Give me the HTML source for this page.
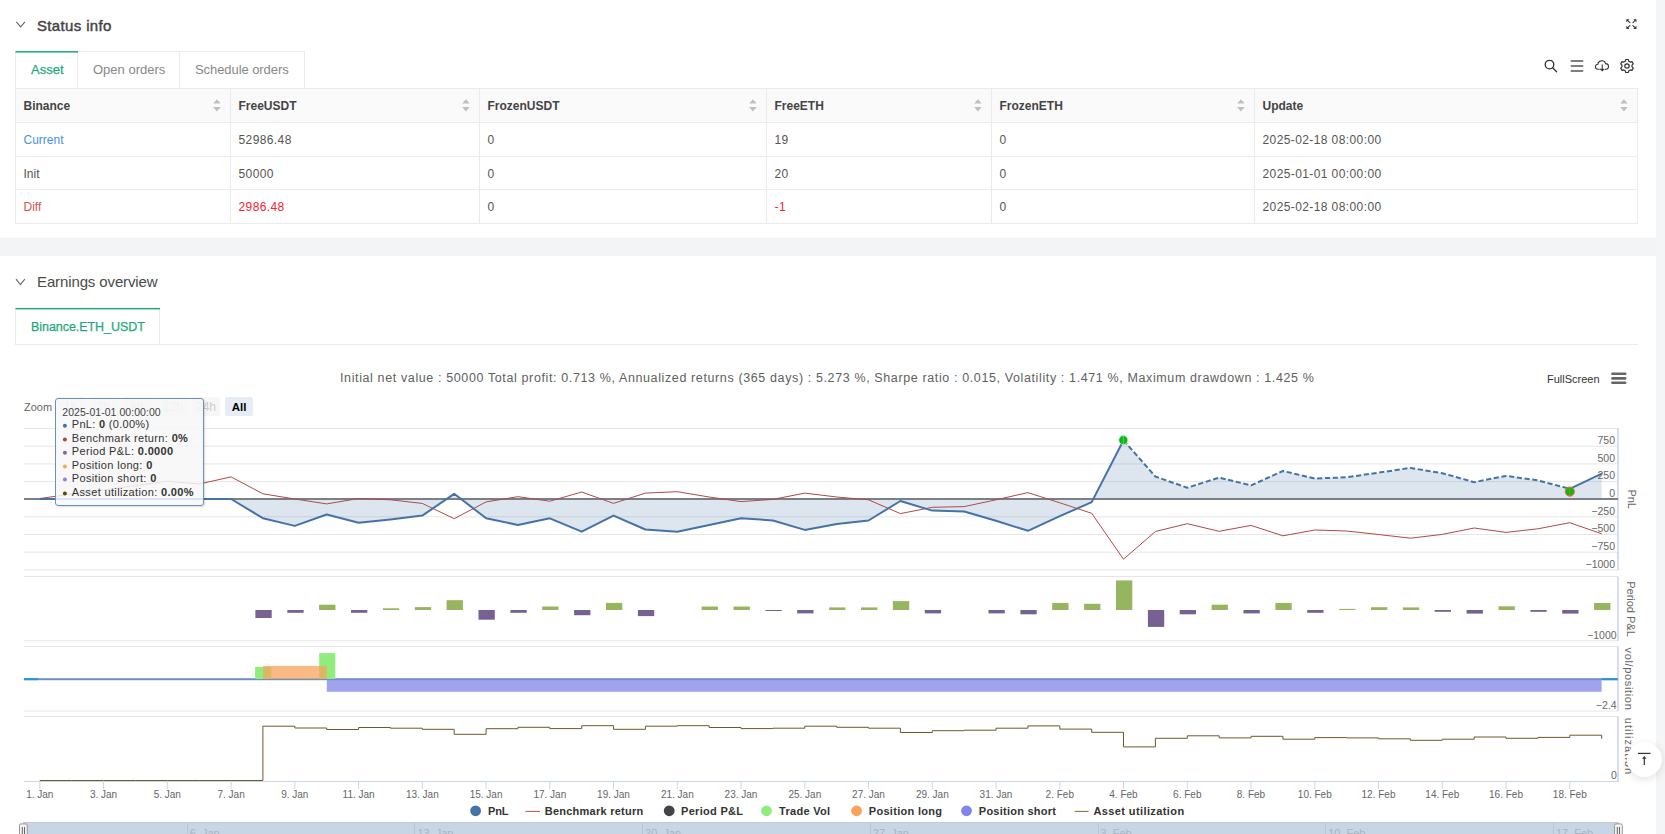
<!DOCTYPE html>
<html><head><meta charset="utf-8"><style>
*{box-sizing:border-box}
html,body{margin:0;padding:0;width:1665px;height:834px;overflow:hidden;background:#fff;font-family:'Liberation Sans', sans-serif;}
.a{position:absolute;white-space:pre}
.band{position:absolute;left:0;width:1656px;top:238px;height:18px;background:#f3f4f6}
.sb{position:absolute;left:1656px;top:0;width:9px;height:834px;background:#f4f5f7}
.tabs .t{position:absolute;top:51px;height:37px;border:1px solid #ebebeb;border-bottom:none;background:#fff}
.tbl{position:absolute;left:15px;top:88px;width:1623px;border-collapse:collapse}
.cell{position:absolute;font-size:12px;color:#555}
</style></head><body>
<div class="sb"></div>
<div class="band"></div>
<svg class="a" style="left:0;top:0" width="40" height="40"><polyline points="16.3,21.8 20.6,26.8 24.9,21.8" fill="none" stroke="#666" stroke-width="1.1"/></svg>
<div class="a" style="left:37px;top:16px;font-size:15px;line-height:20px;color:#444;-webkit-text-stroke:0.45px #444;letter-spacing:0.35px">Status info</div>
<svg class="a" style="left:1620px;top:13px" width="22" height="22" viewBox="0 0 22 22"><g transform="translate(11.4,11.1) scale(1.13) translate(-11.25,-11.35)"><g stroke="#3a3a3a" stroke-width="1.05" fill="none" stroke-linecap="round"><path d="M7.6,7.8 L9.9,10"/><path d="M14.9,7.8 L12.6,10"/><path d="M7.6,14.9 L9.9,12.7"/><path d="M14.9,14.9 L12.6,12.7"/></g><g fill="#3a3a3a"><path d="M6.8,7 L9.6,7 L6.8,9.8 Z"/><path d="M15.7,7 L12.9,7 L15.7,9.8 Z"/><path d="M6.8,15.7 L9.6,15.7 L6.8,12.9 Z"/><path d="M15.7,15.7 L12.9,15.7 L15.7,12.9 Z"/></g></g></svg>
<div class="a" style="left:15px;top:51px;width:290px;height:38px;border:1px solid #ebebeb;border-bottom:none"></div>
<div class="a" style="left:77px;top:51px;width:1px;height:37px;background:#ebebeb"></div>
<div class="a" style="left:179px;top:51px;width:1px;height:37px;background:#ebebeb"></div>
<svg class="a" style="left:0;top:40px" width="100" height="20"><rect x="15.5" y="11.1" width="62.5" height="1.5" fill="#1fa97c"/></svg>
<div class="a" style="left:31px;top:62px;font-size:13px;line-height:16px;color:#1fa97c;-webkit-text-stroke:0.25px #1fa97c">Asset</div>
<div class="a" style="left:93px;top:62px;font-size:13px;line-height:16px;color:#888">Open orders</div>
<div class="a" style="left:195px;top:62px;font-size:13px;line-height:16px;color:#888;letter-spacing:-0.07px">Schedule orders</div>
<svg class="a" style="left:1540px;top:55px" width="100" height="22" viewBox="1540 55 100 22"><g fill="none" stroke="#333" stroke-width="1.3"><circle cx="1549.5" cy="64.6" r="4.3"/><path d="M1552.7,67.8 L1556.6,71.7" stroke-linecap="round"/></g><g stroke="#555" stroke-width="1.5"><path d="M1570.7,60.9 H1583.2 M1570.7,66.1 H1583.2 M1570.7,71.1 H1583.2"/></g><g fill="none" stroke="#333" stroke-width="1.2" stroke-linecap="round" transform="translate(1602,65.5) scale(0.9) translate(-1602,-65.5)"><path d="M1599,69.6 H1597.6 C1593.8,69.6 1593.8,64.2 1597.4,64.2 C1597.8,59.6 1604.6,58.8 1606,63.4 C1610.2,63.4 1610.2,69.6 1606.6,69.6 H1605.4"/><path d="M1602.2,64.8 V71.4 M1600.4,69.6 L1602.2,71.4 L1604,69.6"/></g><g fill="none" stroke="#333" stroke-width="1.2" stroke-linejoin="round"><path d="M1625.26,61.21 L1625.74,59.52 L1628.26,59.52 L1628.74,61.21 L1630.28,62.09 L1631.98,61.67 L1633.24,63.85 L1632.02,65.11 L1632.02,66.89 L1633.24,68.15 L1631.98,70.33 L1630.28,69.91 L1628.74,70.79 L1628.26,72.48 L1625.74,72.48 L1625.26,70.79 L1623.72,69.91 L1622.02,70.33 L1620.76,68.15 L1621.98,66.89 L1621.98,65.11 L1620.76,63.85 L1622.02,61.67 L1623.72,62.09 Z"/><circle cx="1627" cy="66" r="2.2"/></g></svg>
<div class="a" style="left:15px;top:88px;width:1623px;height:35px;background:#fafafa"></div>
<div class="a" style="left:15px;top:88.0px;width:1623px;height:1px;background:#ebebeb"></div>
<div class="a" style="left:15px;top:122.0px;width:1623px;height:1px;background:#ebebeb"></div>
<div class="a" style="left:15px;top:156.0px;width:1623px;height:1px;background:#ebebeb"></div>
<div class="a" style="left:15px;top:189.0px;width:1623px;height:1px;background:#ebebeb"></div>
<div class="a" style="left:15px;top:223.0px;width:1623px;height:1px;background:#ebebeb"></div>
<div class="a" style="left:15.0px;top:88px;width:1px;height:136px;background:#ebebeb"></div>
<div class="a" style="left:230.0px;top:88px;width:1px;height:136px;background:#ebebeb"></div>
<div class="a" style="left:479.0px;top:88px;width:1px;height:136px;background:#ebebeb"></div>
<div class="a" style="left:766.0px;top:88px;width:1px;height:136px;background:#ebebeb"></div>
<div class="a" style="left:991.0px;top:88px;width:1px;height:136px;background:#ebebeb"></div>
<div class="a" style="left:1254.0px;top:88px;width:1px;height:136px;background:#ebebeb"></div>
<div class="a" style="left:1637.0px;top:88px;width:1px;height:136px;background:#ebebeb"></div>
<div class="a" style="left:23.5px;top:98.5px;font-size:12px;line-height:15px;font-weight:bold;color:#444">Binance</div>
<svg class="a" style="left:213.0px;top:98px" width="8" height="14" viewBox="0 0 8 14"><path d="M0.2,5.6 L3.9,1.2 L7.6,5.6 Z M0.2,9 L3.9,13.4 L7.6,9 Z" fill="#bfbfbf"/></svg>
<div class="a" style="left:238.5px;top:98.5px;font-size:12px;line-height:15px;font-weight:bold;color:#444">FreeUSDT</div>
<svg class="a" style="left:462.0px;top:98px" width="8" height="14" viewBox="0 0 8 14"><path d="M0.2,5.6 L3.9,1.2 L7.6,5.6 Z M0.2,9 L3.9,13.4 L7.6,9 Z" fill="#bfbfbf"/></svg>
<div class="a" style="left:487.5px;top:98.5px;font-size:12px;line-height:15px;font-weight:bold;color:#444">FrozenUSDT</div>
<svg class="a" style="left:749.0px;top:98px" width="8" height="14" viewBox="0 0 8 14"><path d="M0.2,5.6 L3.9,1.2 L7.6,5.6 Z M0.2,9 L3.9,13.4 L7.6,9 Z" fill="#bfbfbf"/></svg>
<div class="a" style="left:774.5px;top:98.5px;font-size:12px;line-height:15px;font-weight:bold;color:#444">FreeETH</div>
<svg class="a" style="left:974.0px;top:98px" width="8" height="14" viewBox="0 0 8 14"><path d="M0.2,5.6 L3.9,1.2 L7.6,5.6 Z M0.2,9 L3.9,13.4 L7.6,9 Z" fill="#bfbfbf"/></svg>
<div class="a" style="left:999.5px;top:98.5px;font-size:12px;line-height:15px;font-weight:bold;color:#444">FrozenETH</div>
<svg class="a" style="left:1237.0px;top:98px" width="8" height="14" viewBox="0 0 8 14"><path d="M0.2,5.6 L3.9,1.2 L7.6,5.6 Z M0.2,9 L3.9,13.4 L7.6,9 Z" fill="#bfbfbf"/></svg>
<div class="a" style="left:1262.5px;top:98.5px;font-size:12px;line-height:15px;font-weight:bold;color:#444">Update</div>
<svg class="a" style="left:1620.0px;top:98px" width="8" height="14" viewBox="0 0 8 14"><path d="M0.2,5.6 L3.9,1.2 L7.6,5.6 Z M0.2,9 L3.9,13.4 L7.6,9 Z" fill="#bfbfbf"/></svg>
<div class="a" style="left:23.5px;top:133px;font-size:12px;line-height:14px;color:#4a90e2;letter-spacing:0">Current</div>
<div class="a" style="left:238.5px;top:133px;font-size:12px;line-height:14px;color:#555;letter-spacing:0.4px">52986.48</div>
<div class="a" style="left:487.5px;top:133px;font-size:12px;line-height:14px;color:#555;letter-spacing:0.4px">0</div>
<div class="a" style="left:774.5px;top:133px;font-size:12px;line-height:14px;color:#555;letter-spacing:0.4px">19</div>
<div class="a" style="left:999.5px;top:133px;font-size:12px;line-height:14px;color:#555;letter-spacing:0.4px">0</div>
<div class="a" style="left:1262.5px;top:133px;font-size:12px;line-height:14px;color:#555;letter-spacing:0.4px">2025-02-18 08:00:00</div>
<div class="a" style="left:23.5px;top:167px;font-size:12px;line-height:14px;color:#555;letter-spacing:0">Init</div>
<div class="a" style="left:238.5px;top:167px;font-size:12px;line-height:14px;color:#555;letter-spacing:0.4px">50000</div>
<div class="a" style="left:487.5px;top:167px;font-size:12px;line-height:14px;color:#555;letter-spacing:0.4px">0</div>
<div class="a" style="left:774.5px;top:167px;font-size:12px;line-height:14px;color:#555;letter-spacing:0.4px">20</div>
<div class="a" style="left:999.5px;top:167px;font-size:12px;line-height:14px;color:#555;letter-spacing:0.4px">0</div>
<div class="a" style="left:1262.5px;top:167px;font-size:12px;line-height:14px;color:#555;letter-spacing:0.4px">2025-01-01 00:00:00</div>
<div class="a" style="left:23.5px;top:200px;font-size:12px;line-height:14px;color:#d9534f;letter-spacing:0">Diff</div>
<div class="a" style="left:238.5px;top:200px;font-size:12px;line-height:14px;color:#f5222d;letter-spacing:0.4px">2986.48</div>
<div class="a" style="left:487.5px;top:200px;font-size:12px;line-height:14px;color:#555;letter-spacing:0.4px">0</div>
<div class="a" style="left:774.5px;top:200px;font-size:12px;line-height:14px;color:#f5222d;letter-spacing:0.4px">-1</div>
<div class="a" style="left:999.5px;top:200px;font-size:12px;line-height:14px;color:#555;letter-spacing:0.4px">0</div>
<div class="a" style="left:1262.5px;top:200px;font-size:12px;line-height:14px;color:#555;letter-spacing:0.4px">2025-02-18 08:00:00</div>
<svg class="a" style="left:0;top:260px" width="40" height="40"><polyline points="16,19.2 20.4,24.6 24.8,19.2" fill="none" stroke="#666" stroke-width="1.1"/></svg>
<div class="a" style="left:37px;top:272px;font-size:15px;line-height:20px;color:#4a4a4a;letter-spacing:-0.12px">Earnings overview</div>
<div class="a" style="left:15px;top:308px;width:145px;height:37px;border:1px solid #ebebeb;border-bottom:none"></div>
<div class="a" style="left:15px;top:344px;width:1623px;height:1px;background:#ebebeb"></div>
<svg class="a" style="left:0;top:300px" width="200" height="20"><rect x="15.5" y="7.9" width="144.5" height="1.5" fill="#1fa97c"/></svg>
<div class="a" style="left:31px;top:319px;font-size:12.5px;line-height:16px;color:#1fa97c;-webkit-text-stroke:0.25px #1fa97c;letter-spacing:-0.05px">Binance.ETH_USDT</div>
<div class="a" style="left:340px;top:371px;font-size:12.5px;line-height:15px;color:#606060;letter-spacing:0.62px">Initial net value : 50000 Total profit: 0.713 %, Annualized returns (365 days) : 5.273 %, Sharpe ratio : 0.015, Volatility : 1.471 %, Maximum drawdown : 1.425 %</div>
<div class="a" style="left:1547px;top:373px;font-size:11px;line-height:13px;color:#333">FullScreen</div>
<svg class="a" style="left:1608px;top:368px" width="22" height="20"><g stroke="#666" stroke-width="2.6" stroke-linecap="round"><path d="M4.4,5.7 H17.2 M4.4,10.4 H17.2 M4.4,14.8 H17.2"/></g></svg>
<div class="a" style="left:24px;top:401px;font-size:11px;line-height:13px;color:#666">Zoom</div>
<div class="a" style="left:57px;top:397px;width:28px;height:19px;background:#f7f7f7;border-radius:2px;font-size:12px;line-height:21px;color:#ccc;text-align:center">1h</div>
<div class="a" style="left:89.5px;top:397px;width:28px;height:19px;background:#f7f7f7;border-radius:2px;font-size:12px;line-height:21px;color:#ccc;text-align:center">3h</div>
<div class="a" style="left:123px;top:397px;width:28px;height:19px;background:#f7f7f7;border-radius:2px;font-size:12px;line-height:21px;color:#ccc;text-align:center">8h</div>
<div class="a" style="left:159px;top:397px;width:28px;height:19px;background:#f7f7f7;border-radius:2px;font-size:12px;line-height:21px;color:#ccc;text-align:center">12h</div>
<div class="a" style="left:192px;top:397px;width:28px;height:19px;background:#f7f7f7;border-radius:2px;font-size:12px;line-height:21px;color:#ccc;text-align:center">24h</div>
<div class="a" style="left:225px;top:397px;width:28px;height:19px;background:#e6ebf5;border-radius:2px;font-size:11.5px;line-height:21px;color:#000;font-weight:bold;text-align:center">All</div>
<svg class="a" style="left:0;top:795px" width="1665" height="30" viewBox="0 795 1665 30" font-family="Liberation Sans, sans-serif" font-size="11" font-weight="bold" fill="#333"><circle cx="475.6" cy="810.8" r="5.4" fill="#4572a7"/><text x="488" y="814.7" style="letter-spacing:-0.1px">PnL</text><line x1="525.5" x2="540" y1="811.4" y2="811.4" stroke="#c0504d" stroke-width="1"/><text x="544.7" y="814.7" style="letter-spacing:0.25px">Benchmark return</text><circle cx="669.2" cy="810.8" r="5.4" fill="#434348"/><text x="681" y="814.7" style="letter-spacing:0.3px">Period P&amp;L</text><circle cx="766.5" cy="810.8" r="5.4" fill="#90ed7d"/><text x="779" y="814.7" style="letter-spacing:0.3px">Trade Vol</text><circle cx="856.6" cy="810.8" r="5.4" fill="#f7a35c"/><text x="868.8" y="814.7" style="letter-spacing:0.3px">Position long</text><circle cx="966.5" cy="810.8" r="5.4" fill="#8085e9"/><text x="978.8" y="814.7" style="letter-spacing:0.25px">Position short</text><line x1="1074.6" x2="1088.6" y1="811.4" y2="811.4" stroke="#7a6a3a" stroke-width="1"/><text x="1093.4" y="814.7" style="letter-spacing:0.4px">Asset utilization</text></svg>
<div class="a" style="left:23px;top:822px;width:1596px;height:12px;background:#c8d5e5;border-top:1px solid #c4cad3"></div>
<div class="a" style="left:186.7px;top:823px;width:1px;height:11px;background:#b8c6d8"></div>
<div class="a" style="left:189.7px;top:827px;font-size:11px;line-height:13px;color:#a9b4c2">6. Jan</div>
<div class="a" style="left:414.4px;top:823px;width:1px;height:11px;background:#b8c6d8"></div>
<div class="a" style="left:417.4px;top:827px;font-size:11px;line-height:13px;color:#a9b4c2">13. Jan</div>
<div class="a" style="left:642.1px;top:823px;width:1px;height:11px;background:#b8c6d8"></div>
<div class="a" style="left:645.1px;top:827px;font-size:11px;line-height:13px;color:#a9b4c2">20. Jan</div>
<div class="a" style="left:869.8px;top:823px;width:1px;height:11px;background:#b8c6d8"></div>
<div class="a" style="left:872.8px;top:827px;font-size:11px;line-height:13px;color:#a9b4c2">27. Jan</div>
<div class="a" style="left:1097.5px;top:823px;width:1px;height:11px;background:#b8c6d8"></div>
<div class="a" style="left:1100.5px;top:827px;font-size:11px;line-height:13px;color:#a9b4c2">3. Feb</div>
<div class="a" style="left:1325.2px;top:823px;width:1px;height:11px;background:#b8c6d8"></div>
<div class="a" style="left:1328.2px;top:827px;font-size:11px;line-height:13px;color:#a9b4c2">10. Feb</div>
<div class="a" style="left:1552.9px;top:823px;width:1px;height:11px;background:#b8c6d8"></div>
<div class="a" style="left:1555.9px;top:827px;font-size:11px;line-height:13px;color:#a9b4c2">17. Feb</div>
<svg class="a" style="left:17px;top:822px" width="14" height="14"><rect x="2.5" y="1.9" width="7.8" height="14" rx="1.5" fill="#f2f2f2" stroke="#999" stroke-width="1"/><path d="M5.3,5 V13 M7.5,5 V13" stroke="#555" stroke-width="0.9"/></svg>
<svg class="a" style="left:1612px;top:822px" width="14" height="14"><rect x="2.5" y="1.9" width="7.8" height="14" rx="1.5" fill="#f2f2f2" stroke="#999" stroke-width="1"/><path d="M5.3,5 V13 M7.5,5 V13" stroke="#555" stroke-width="0.9"/></svg>
<svg class="a" style="left:0;top:0" width="1665" height="834" viewBox="0 0 1665 834" font-family="'Liberation Sans', sans-serif">
<line x1="24" x2="1618" y1="428.5" y2="428.5" stroke="#e6e6e6" stroke-width="1"/>
<line x1="24" x2="1618" y1="446.2" y2="446.2" stroke="#e6e6e6" stroke-width="1"/>
<line x1="24" x2="1618" y1="463.9" y2="463.9" stroke="#e6e6e6" stroke-width="1"/>
<line x1="24" x2="1618" y1="481.6" y2="481.6" stroke="#e6e6e6" stroke-width="1"/>
<line x1="24" x2="1618" y1="516.8" y2="516.8" stroke="#e6e6e6" stroke-width="1"/>
<line x1="24" x2="1618" y1="534.5" y2="534.5" stroke="#e6e6e6" stroke-width="1"/>
<line x1="24" x2="1618" y1="552.2" y2="552.2" stroke="#e6e6e6" stroke-width="1"/>
<line x1="24" x2="1618" y1="569.9" y2="569.9" stroke="#e6e6e6" stroke-width="1"/>
<line x1="24" x2="1618" y1="576.5" y2="576.5" stroke="#e6e6e6" stroke-width="1"/>
<line x1="24" x2="1618" y1="640.8" y2="640.8" stroke="#e6e6e6" stroke-width="1"/>
<line x1="24" x2="1618" y1="646.5" y2="646.5" stroke="#e6e6e6" stroke-width="1"/>
<line x1="24" x2="1618" y1="711" y2="711" stroke="#e6e6e6" stroke-width="1"/>
<line x1="24" x2="1618" y1="716.5" y2="716.5" stroke="#e6e6e6" stroke-width="1"/>
<line x1="1618" x2="1618" y1="428" y2="570" stroke="#ccd6eb" stroke-width="1.6"/>
<line x1="1618" x2="1618" y1="576.5" y2="641" stroke="#ccd6eb" stroke-width="1.6"/>
<line x1="1618" x2="1618" y1="646.5" y2="711" stroke="#ccd6eb" stroke-width="1.6"/>
<line x1="1618" x2="1618" y1="716.5" y2="781.5" stroke="#ccd6eb" stroke-width="1.6"/>
<line x1="24" x2="1619" y1="781.5" y2="781.5" stroke="#ccd6eb" stroke-width="1"/>
<line x1="39.8" x2="39.8" y1="782" y2="789" stroke="#ccd6eb" stroke-width="1"/>
<text x="39.8" y="798" text-anchor="middle" font-size="10" fill="#666" style="letter-spacing:0">1. Jan</text>
<line x1="103.5" x2="103.5" y1="782" y2="789" stroke="#ccd6eb" stroke-width="1"/>
<text x="103.5" y="798" text-anchor="middle" font-size="10" fill="#666" style="letter-spacing:0">3. Jan</text>
<line x1="167.3" x2="167.3" y1="782" y2="789" stroke="#ccd6eb" stroke-width="1"/>
<text x="167.3" y="798" text-anchor="middle" font-size="10" fill="#666" style="letter-spacing:0">5. Jan</text>
<line x1="231.1" x2="231.1" y1="782" y2="789" stroke="#ccd6eb" stroke-width="1"/>
<text x="231.1" y="798" text-anchor="middle" font-size="10" fill="#666" style="letter-spacing:0">7. Jan</text>
<line x1="294.8" x2="294.8" y1="782" y2="789" stroke="#ccd6eb" stroke-width="1"/>
<text x="294.8" y="798" text-anchor="middle" font-size="10" fill="#666" style="letter-spacing:0">9. Jan</text>
<line x1="358.6" x2="358.6" y1="782" y2="789" stroke="#ccd6eb" stroke-width="1"/>
<text x="358.6" y="798" text-anchor="middle" font-size="10" fill="#666" style="letter-spacing:0">11. Jan</text>
<line x1="422.3" x2="422.3" y1="782" y2="789" stroke="#ccd6eb" stroke-width="1"/>
<text x="422.3" y="798" text-anchor="middle" font-size="10" fill="#666" style="letter-spacing:0">13. Jan</text>
<line x1="486.1" x2="486.1" y1="782" y2="789" stroke="#ccd6eb" stroke-width="1"/>
<text x="486.1" y="798" text-anchor="middle" font-size="10" fill="#666" style="letter-spacing:0">15. Jan</text>
<line x1="549.8" x2="549.8" y1="782" y2="789" stroke="#ccd6eb" stroke-width="1"/>
<text x="549.8" y="798" text-anchor="middle" font-size="10" fill="#666" style="letter-spacing:0">17. Jan</text>
<line x1="613.5" x2="613.5" y1="782" y2="789" stroke="#ccd6eb" stroke-width="1"/>
<text x="613.5" y="798" text-anchor="middle" font-size="10" fill="#666" style="letter-spacing:0">19. Jan</text>
<line x1="677.3" x2="677.3" y1="782" y2="789" stroke="#ccd6eb" stroke-width="1"/>
<text x="677.3" y="798" text-anchor="middle" font-size="10" fill="#666" style="letter-spacing:0">21. Jan</text>
<line x1="741.0" x2="741.0" y1="782" y2="789" stroke="#ccd6eb" stroke-width="1"/>
<text x="741.0" y="798" text-anchor="middle" font-size="10" fill="#666" style="letter-spacing:0">23. Jan</text>
<line x1="804.8" x2="804.8" y1="782" y2="789" stroke="#ccd6eb" stroke-width="1"/>
<text x="804.8" y="798" text-anchor="middle" font-size="10" fill="#666" style="letter-spacing:0">25. Jan</text>
<line x1="868.5" x2="868.5" y1="782" y2="789" stroke="#ccd6eb" stroke-width="1"/>
<text x="868.5" y="798" text-anchor="middle" font-size="10" fill="#666" style="letter-spacing:0">27. Jan</text>
<line x1="932.3" x2="932.3" y1="782" y2="789" stroke="#ccd6eb" stroke-width="1"/>
<text x="932.3" y="798" text-anchor="middle" font-size="10" fill="#666" style="letter-spacing:0">29. Jan</text>
<line x1="996.0" x2="996.0" y1="782" y2="789" stroke="#ccd6eb" stroke-width="1"/>
<text x="996.0" y="798" text-anchor="middle" font-size="10" fill="#666" style="letter-spacing:0">31. Jan</text>
<line x1="1059.8" x2="1059.8" y1="782" y2="789" stroke="#ccd6eb" stroke-width="1"/>
<text x="1059.8" y="798" text-anchor="middle" font-size="10" fill="#666" style="letter-spacing:0">2. Feb</text>
<line x1="1123.5" x2="1123.5" y1="782" y2="789" stroke="#ccd6eb" stroke-width="1"/>
<text x="1123.5" y="798" text-anchor="middle" font-size="10" fill="#666" style="letter-spacing:0">4. Feb</text>
<line x1="1187.3" x2="1187.3" y1="782" y2="789" stroke="#ccd6eb" stroke-width="1"/>
<text x="1187.3" y="798" text-anchor="middle" font-size="10" fill="#666" style="letter-spacing:0">6. Feb</text>
<line x1="1251.0" x2="1251.0" y1="782" y2="789" stroke="#ccd6eb" stroke-width="1"/>
<text x="1251.0" y="798" text-anchor="middle" font-size="10" fill="#666" style="letter-spacing:0">8. Feb</text>
<line x1="1314.8" x2="1314.8" y1="782" y2="789" stroke="#ccd6eb" stroke-width="1"/>
<text x="1314.8" y="798" text-anchor="middle" font-size="10" fill="#666" style="letter-spacing:0">10. Feb</text>
<line x1="1378.5" x2="1378.5" y1="782" y2="789" stroke="#ccd6eb" stroke-width="1"/>
<text x="1378.5" y="798" text-anchor="middle" font-size="10" fill="#666" style="letter-spacing:0">12. Feb</text>
<line x1="1442.3" x2="1442.3" y1="782" y2="789" stroke="#ccd6eb" stroke-width="1"/>
<text x="1442.3" y="798" text-anchor="middle" font-size="10" fill="#666" style="letter-spacing:0">14. Feb</text>
<line x1="1506.0" x2="1506.0" y1="782" y2="789" stroke="#ccd6eb" stroke-width="1"/>
<text x="1506.0" y="798" text-anchor="middle" font-size="10" fill="#666" style="letter-spacing:0">16. Feb</text>
<line x1="1569.8" x2="1569.8" y1="782" y2="789" stroke="#ccd6eb" stroke-width="1"/>
<text x="1569.8" y="798" text-anchor="middle" font-size="10" fill="#666" style="letter-spacing:0">18. Feb</text>
<polygon points="39.8,499.1 39.8,499.0 71.7,499.0 103.5,499.0 135.4,499.0 167.3,499.0 199.2,499.0 231.1,499.0 262.9,518.2 294.8,525.9 326.7,514.5 358.6,522.7 390.4,519.4 422.3,515.6 454.2,493.8 486.1,518.2 517.9,525.0 549.8,518.3 581.7,531.7 613.5,515.6 645.4,529.5 677.3,531.7 709.2,525.0 741.0,518.2 772.9,520.5 804.8,529.9 836.7,524.1 868.5,520.5 900.4,501.0 932.3,510.6 964.2,511.5 996.0,520.8 1027.9,530.8 1059.8,516.2 1091.7,502.1 1123.5,440.3 1155.4,476.6 1187.3,487.7 1219.2,477.6 1251.0,485.4 1282.9,471.0 1314.8,478.5 1346.7,477.3 1378.5,472.7 1410.4,467.9 1442.3,473.2 1474.2,482.2 1506.0,475.9 1537.9,480.4 1569.8,488.8 1601.7,473.6 1601.7,499.1" fill="#4572a7" fill-opacity="0.18"/>
<line x1="24" x2="1618" y1="499.1" y2="499.1" stroke="#7b7f86" stroke-width="2"/>
<polyline points="39.8,498.5 71.7,494.0 103.5,490.0 135.4,485.5 167.3,481.2 199.2,484.0 231.1,476.9 262.9,493.8 294.8,499.0 326.7,503.9 358.6,498.5 390.4,499.8 422.3,503.4 454.2,518.7 486.1,501.9 517.9,496.7 549.8,501.2 581.7,492.0 613.5,503.4 645.4,493.1 677.3,491.7 709.2,497.0 741.0,501.6 772.9,499.4 804.8,493.1 836.7,497.0 868.5,499.8 900.4,513.6 932.3,507.3 964.2,506.6 996.0,499.8 1027.9,492.6 1059.8,502.8 1091.7,513.3 1123.5,559.2 1155.4,531.5 1187.3,523.7 1219.2,531.3 1251.0,525.4 1282.9,535.8 1314.8,530.0 1346.7,531.0 1378.5,534.5 1410.4,538.2 1442.3,534.4 1474.2,528.0 1506.0,532.4 1537.9,528.8 1569.8,522.7 1601.7,533.8" fill="none" stroke="#b04a47" stroke-width="1"/>
<polyline points="39.8,499.0 71.7,499.0 103.5,499.0 135.4,499.0 167.3,499.0 199.2,499.0 231.1,499.0 262.9,518.2 294.8,525.9 326.7,514.5 358.6,522.7 390.4,519.4 422.3,515.6 454.2,493.8 486.1,518.2 517.9,525.0 549.8,518.3 581.7,531.7 613.5,515.6 645.4,529.5 677.3,531.7 709.2,525.0 741.0,518.2 772.9,520.5 804.8,529.9 836.7,524.1 868.5,520.5 900.4,501.0 932.3,510.6 964.2,511.5 996.0,520.8 1027.9,530.8 1059.8,516.2 1091.7,502.1 1123.5,440.3" fill="none" stroke="#4572a7" stroke-width="2" stroke-linejoin="round"/>
<polyline points="1123.5,440.3 1155.4,476.6 1187.3,487.7 1219.2,477.6 1251.0,485.4 1282.9,471.0 1314.8,478.5 1346.7,477.3 1378.5,472.7 1410.4,467.9 1442.3,473.2 1474.2,482.2 1506.0,475.9 1537.9,480.4 1569.8,488.8" fill="none" stroke="#4572a7" stroke-width="2" stroke-dasharray="5.2,2.6" stroke-linejoin="round"/>
<polyline points="1569.8,488.8 1601.7,473.6" fill="none" stroke="#4572a7" stroke-width="2" stroke-linejoin="round"/>
<circle cx="1123.3" cy="440.1" r="4.5" fill="#00c000" stroke="#cfe6f5" stroke-width="0.8"/>
<line x1="1123.3" x2="1123.3" y1="435.8" y2="444.4" stroke="#7cc2b0" stroke-width="0.8"/>
<circle cx="1569.8" cy="491.6" r="4.6" fill="#00c000" stroke="#f06a50" stroke-width="1"/>
<line x1="1569.8" x2="1569.8" y1="487" y2="496.2" stroke="#e0643c" stroke-width="1"/>
<rect x="255.4" y="610" width="16.3" height="8.0" fill="#766192"/>
<rect x="287.3" y="610" width="16.3" height="2.8" fill="#766192"/>
<rect x="319.1" y="604.7" width="16.3" height="5.3" fill="#95b560"/>
<rect x="351.0" y="610" width="16.3" height="2.8" fill="#766192"/>
<rect x="382.9" y="608.3" width="16.3" height="1.7" fill="#95b560"/>
<rect x="414.8" y="607.1" width="16.3" height="2.9" fill="#95b560"/>
<rect x="446.6" y="600.2" width="16.3" height="9.8" fill="#95b560"/>
<rect x="478.5" y="610" width="16.3" height="9.7" fill="#766192"/>
<rect x="510.4" y="610" width="16.3" height="2.8" fill="#766192"/>
<rect x="542.2" y="606.5" width="16.3" height="3.5" fill="#95b560"/>
<rect x="574.1" y="610" width="16.3" height="5.2" fill="#766192"/>
<rect x="606.0" y="602.9" width="16.3" height="7.1" fill="#95b560"/>
<rect x="637.9" y="610" width="16.3" height="6.1" fill="#766192"/>
<rect x="701.6" y="606.5" width="16.3" height="3.5" fill="#95b560"/>
<rect x="733.5" y="606.5" width="16.3" height="3.5" fill="#95b560"/>
<rect x="765.4" y="610" width="16.3" height="1.0" fill="#766192"/>
<rect x="797.2" y="610" width="16.3" height="3.4" fill="#766192"/>
<rect x="829.1" y="607.4" width="16.3" height="2.6" fill="#95b560"/>
<rect x="861.0" y="607.4" width="16.3" height="2.6" fill="#95b560"/>
<rect x="892.9" y="601.1" width="16.3" height="8.9" fill="#95b560"/>
<rect x="924.8" y="610" width="16.3" height="3.4" fill="#766192"/>
<rect x="988.5" y="610" width="16.3" height="3.4" fill="#766192"/>
<rect x="1020.4" y="610" width="16.3" height="4.3" fill="#766192"/>
<rect x="1052.2" y="602.9" width="16.3" height="7.1" fill="#95b560"/>
<rect x="1084.1" y="603.8" width="16.3" height="6.2" fill="#95b560"/>
<rect x="1116.0" y="580.4" width="16.3" height="29.6" fill="#95b560"/>
<rect x="1147.9" y="610" width="16.3" height="16.9" fill="#766192"/>
<rect x="1179.7" y="610" width="16.3" height="4.3" fill="#766192"/>
<rect x="1211.6" y="604.7" width="16.3" height="5.3" fill="#95b560"/>
<rect x="1243.5" y="610" width="16.3" height="3.4" fill="#766192"/>
<rect x="1275.4" y="602.9" width="16.3" height="7.1" fill="#95b560"/>
<rect x="1307.2" y="610" width="16.3" height="2.8" fill="#766192"/>
<rect x="1339.1" y="608.9" width="16.3" height="1.1" fill="#95b560"/>
<rect x="1371.0" y="607.2" width="16.3" height="2.8" fill="#95b560"/>
<rect x="1402.9" y="607.4" width="16.3" height="2.6" fill="#95b560"/>
<rect x="1434.7" y="610" width="16.3" height="1.8" fill="#766192"/>
<rect x="1466.6" y="610" width="16.3" height="3.6" fill="#766192"/>
<rect x="1498.5" y="606.3" width="16.3" height="3.7" fill="#95b560"/>
<rect x="1530.4" y="610" width="16.3" height="1.8" fill="#766192"/>
<rect x="1562.2" y="610" width="16.3" height="3.6" fill="#766192"/>
<rect x="1594.1" y="603.0" width="16.3" height="7.0" fill="#95b560"/>
<rect x="24" y="678.2" width="1594" height="2" fill="#6e90c4"/>
<rect x="24" y="678.2" width="14" height="2" fill="#1e9bd7"/>
<rect x="1602" y="678.2" width="15.5" height="2" fill="#1e9bd7"/>
<rect x="255.1" y="666.8" width="16.3" height="12.2" fill="#90ed7d"/>
<rect x="319.2" y="653.1" width="16.1" height="25.9" fill="#90ed7d"/>
<rect x="263.1" y="665.9" width="63.7" height="13.1" fill="#f7a35c" fill-opacity="0.75"/>
<rect x="326.8" y="679.2" width="1274.8" height="12.6" fill="#8085e9" fill-opacity="0.75"/>
<path d="M39.8,780.5 H71.7 V780.5 H103.5 V780.5 H135.4 V780.5 H167.3 V780.5 H199.2 V780.5 H231.1 V780.5 H262.9 V726.2 H294.8 V728.0 H326.7 V729.5 H358.6 V727.5 H390.4 V728.2 H422.3 V729.3 H454.2 V734.3 H486.1 V728.7 H517.9 V727.3 H549.8 V728.6 H581.7 V725.7 H613.5 V729.3 H645.4 V726.2 H677.3 V725.7 H709.2 V727.5 H741.0 V728.6 H772.9 V728.2 H804.8 V726.2 H836.7 V727.3 H868.5 V728.2 H900.4 V732.5 H932.3 V730.7 H964.2 V730.2 H996.0 V728.2 H1027.9 V725.9 H1059.8 V729.1 H1091.7 V732.3 H1123.5 V746.9 H1155.4 V738.3 H1187.3 V735.8 H1219.2 V737.9 H1251.0 V736.3 H1282.9 V739.2 H1314.8 V737.6 H1346.7 V737.9 H1378.5 V738.8 H1410.4 V740.3 H1442.3 V739.2 H1474.2 V737.0 H1506.0 V738.3 H1537.9 V737.4 H1569.8 V735.2 H1601.7 V738.8" fill="none" stroke="#6b5a2a" stroke-width="1"/>
<text x="1615" y="444" text-anchor="end" font-size="10.5" fill="#666">750</text>
<text x="1615" y="461.7" text-anchor="end" font-size="10.5" fill="#666">500</text>
<text x="1615" y="479.4" text-anchor="end" font-size="10.5" fill="#666">250</text>
<text x="1615" y="497.2" text-anchor="end" font-size="10.5" fill="#666">0</text>
<text x="1615" y="514.6" text-anchor="end" font-size="10.5" fill="#666">−250</text>
<text x="1615" y="532.3" text-anchor="end" font-size="10.5" fill="#666">−500</text>
<text x="1615" y="550" text-anchor="end" font-size="10.5" fill="#666">−750</text>
<text x="1615" y="567.7" text-anchor="end" font-size="10.5" fill="#666">−1000</text>
<text x="1616.6" y="638.5" text-anchor="end" font-size="10.5" fill="#666">−1000</text>
<text x="1616.6" y="709" text-anchor="end" font-size="10.5" fill="#666">−2.4</text>
<text x="1616.8" y="779" text-anchor="end" font-size="10.5" fill="#666">0</text>
<text x="0" y="0" transform="translate(1627.5,499.2) rotate(90)" text-anchor="middle" font-size="11" fill="#666" style="letter-spacing:0px">PnL</text>
<text x="0" y="0" transform="translate(1626.8,609) rotate(90)" text-anchor="middle" font-size="11" fill="#666" style="letter-spacing:0px">Period P&amp;L</text>
<text x="0" y="0" transform="translate(1625,679) rotate(90)" text-anchor="middle" font-size="11" fill="#666" style="letter-spacing:0.65px">vol/position</text>
<text x="0" y="0" transform="translate(1625,746.5) rotate(90)" text-anchor="middle" font-size="11" fill="#666" style="letter-spacing:1.05px">utilization</text>
</svg>
<div class="a" style="left:54.5px;top:398px;width:149px;height:108px;border:1px solid #6a8fc0;border-radius:3px;background:rgba(247,247,247,0.85);box-shadow:1px 1px 2px rgba(0,0,0,0.15)"></div>
<svg class="a" style="left:0;top:390px" width="220" height="120" viewBox="0 390 220 120" font-family="Liberation Sans, sans-serif" fill="#333"><text x="62.3" y="415.8" font-size="10.5" fill="#444" style="letter-spacing:0.05px">2025-01-01 00:00:00</text><circle cx="64.9" cy="425.8" r="2" fill="#4572a7"/><text x="71.8" y="428.4" font-size="11" style="letter-spacing:0.3px">PnL: <tspan font-weight="bold">0</tspan> (0.00%)</text><circle cx="64.9" cy="439.6" r="2" fill="#aa4643"/><text x="71.8" y="442.2" font-size="11" style="letter-spacing:0.35px">Benchmark return: <tspan font-weight="bold">0%</tspan></text><circle cx="64.9" cy="452.7" r="2" fill="#80699b"/><text x="71.8" y="455.3" font-size="11" style="letter-spacing:0.35px">Period P&amp;L: <tspan font-weight="bold">0.0000</tspan></text><circle cx="64.9" cy="466.5" r="2" fill="#f7a35c"/><text x="71.8" y="469.1" font-size="11" style="letter-spacing:0.35px">Position long: <tspan font-weight="bold">0</tspan></text><circle cx="64.9" cy="479.6" r="2" fill="#8085e9"/><text x="71.8" y="482.2" font-size="11" style="letter-spacing:0.35px">Position short: <tspan font-weight="bold">0</tspan></text><circle cx="64.9" cy="493.4" r="2" fill="#5c4b10"/><text x="71.8" y="496.0" font-size="11" style="letter-spacing:0.35px">Asset utilization: <tspan font-weight="bold">0.00%</tspan></text></svg>
<div class="a" style="left:1627px;top:741.5px;width:35px;height:35px;border-radius:50%;background:#fff;box-shadow:0 2px 8px rgba(0,0,0,0.12)"></div>
<svg class="a" style="left:1630px;top:745px" width="30" height="30" viewBox="1630 745 30 30"><path d="M1638,753.4 H1650.5" stroke="#333" stroke-width="1.2"/><path d="M1644.3,765 V756.5" stroke="#333" stroke-width="1.2"/><path d="M1642,758.8 L1644.3,756.2 L1646.6,758.8 Z" fill="#333"/></svg>
</body></html>
